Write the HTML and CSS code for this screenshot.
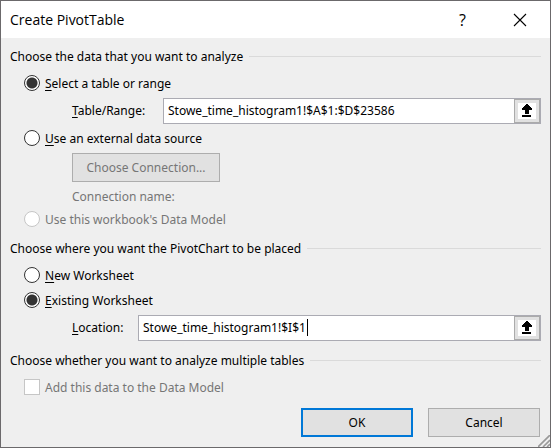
FILE: index.html
```html
<!DOCTYPE html>
<html lang="en">
<head>
<meta charset="utf-8">
<meta name="viewport" content="width=device-width, initial-scale=1">
<title>Create PivotTable</title>
<link rel="stylesheet" href="styles.css">
</head>
<body>
<form class="dialog" role="dialog" aria-labelledby="dialog-title">
  <header class="titlebar">
    <h1 id="dialog-title">Create PivotTable</h1>
    <button type="button" class="caption-button help" aria-label="Help">?</button>
    <button type="button" class="caption-button" aria-label="Close">
      <svg width="14" height="14" viewBox="0 0 14 14"><path d="M1 1 13 13M13 1 1 13" fill="none" stroke="#000" stroke-width="1.1"/></svg>
    </button>
  </header>
  <main class="content">
    <section class="group">
      <h2>Choose the data that you want to analyze</h2>
      <div class="options">
        <label class="choice"><input type="radio" name="source" checked><span><u>S</u>elect a table or range</span></label>
        <div class="field">
          <label class="range-label" for="range"><u>T</u>able/Range:</label>
          <div class="box">
            <input type="text" id="range" value="Stowe_time_histogram1!$A$1:$D$23586">
            <button type="button" class="picker" aria-label="Select range">
              <svg width="18" height="16" viewBox="0 0 18 16" shape-rendering="crispEdges"><path d="M0 0h18v16H0z" fill="#fff"/><path d="M8 1h2v1h1v1h1v1h1v1h1v2h-3v4H7V7H4V5h1V4h1V3h1V2h1zM4 12h9v2H4z"/></svg>
            </button>
          </div>
        </div>
        <label class="choice"><input type="radio" name="source"><span><u>U</u>se an external data source</span></label>
        <div class="connection">
          <button type="button" class="button wide" disabled>Choose Connection...</button>
          <p>Connection name:</p>
        </div>
        <label class="choice disabled"><input type="radio" name="source" disabled><span>Use this workbook's Data Model</span></label>
      </div>
    </section>
    <section class="group">
      <h2>Choose where you want the PivotChart to be placed</h2>
      <div class="options">
        <label class="choice"><input type="radio" name="place"><span><u>N</u>ew Worksheet</span></label>
        <label class="choice"><input type="radio" name="place" checked><span><u>E</u>xisting Worksheet</span></label>
        <div class="field">
          <label class="location-label" for="location"><u>L</u>ocation:</label>
          <div class="box">
            <input type="text" id="location" value="Stowe_time_histogram1!$I$1">
            <span class="caret"></span>
            <button type="button" class="picker" aria-label="Select location">
              <svg width="18" height="16" viewBox="0 0 18 16" shape-rendering="crispEdges"><path d="M0 0h18v16H0z" fill="#fff"/><path d="M8 1h2v1h1v1h1v1h1v1h1v2h-3v4H7V7H4V5h1V4h1V3h1V2h1zM4 12h9v2H4z"/></svg>
            </button>
          </div>
        </div>
      </div>
    </section>
    <section class="group">
      <h2>Choose whether you want to analyze multiple tables</h2>
      <div class="options">
        <label class="choice disabled"><input type="checkbox" disabled><span>Add this data to the Data Model</span></label>
      </div>
    </section>
  </main>
  <footer class="actions">
    <button type="submit" class="button primary">OK</button>
    <button type="button" class="button">Cancel</button>
  </footer>
  <svg class="grip" width="12" height="12" viewBox="0 0 12 12"><path d="M0 12 12 0M5 12 12 5M9 12 12 9" fill="none" stroke="#999" stroke-width="1.6"/></svg>
</form>
</body>
</html>
```
FILE: styles.css
```css
* { box-sizing: border-box; }

body {
  margin: 0;
  background: #efefef;
  color: #000;
  font: 12px/20px "Noto Sans", "Open Sans", sans-serif;
}

.dialog {
  position: relative;
  display: flex;
  flex-direction: column;
  min-height: 100vh;
  border: 1px solid #6b696b;
  background: #efefef;
}

button, input { font: inherit; color: inherit; }

h1, h2, p { margin: 0; font-weight: 400; }

.titlebar {
  display: flex;
  align-items: center;
  height: 37px;
  padding: 0 2px 0 9px;
  background: #fff;
}

h1 {
  flex: 1;
  font: 14px/20px "Open Sans", sans-serif;
}

.caption-button {
  display: grid;
  place-items: center;
  width: 57px;
  height: 36px;
  padding: 0;
  border: 0;
  background: none;
}

.help { font: 16px/20px "Open Sans", sans-serif; }

.content { padding: 9px 9px 0; }

h2 {
  display: flex;
  align-items: center;
  gap: 6px;
  margin-bottom: 6px;
  font-size: 12px;
}

h2::after {
  content: "";
  flex: 1;
  height: 1px;
  margin-bottom: 2px;
  background: #dadada;
}

.options {
  padding-left: 14px;
  margin-bottom: 10px;
}

.choice {
  display: flex;
  align-items: center;
  gap: 5px;
  height: 20px;
  margin-bottom: 5px;
}

.choice span { padding-top: 2px; }

.choice:last-child { margin-bottom: 0; }

u { text-underline-offset: 2px; }

.choice input {
  appearance: none;
  width: 16px;
  height: 16px;
  margin: 0;
  border: 1px solid #333;
  background: #fff;
}

.choice input[type="radio"] { border-radius: 50%; }

.choice input:checked {
  background: radial-gradient(circle, #333 5px, #fff 6px);
}

.choice input:disabled { border-color: #c6c6c6; }

.disabled, .connection { color: #767676; }

.field {
  display: flex;
  align-items: center;
  padding-left: 48px;
  margin-bottom: 4px;
}

.range-label { width: 91px; }
.location-label { width: 66px; }

.box {
  position: relative;
  display: flex;
  flex: 1;
  height: 26px;
  border: 1px solid #ababb3;
  background: #fff;
}

.box input {
  flex: 1;
  min-width: 0;
  padding: 0 4px;
  border: 0;
  background: none;
}

.picker {
  display: grid;
  place-items: center;
  width: 26px;
  padding: 0;
  border: 1px solid #ababab;
  background: #e1e1e1;
}

.picker svg { display: block; }

.caret {
  position: absolute;
  top: 3px;
  left: 168px;
  width: 1px;
  height: 17px;
  background: #000;
}

.connection {
  padding-left: 48px;
  margin-bottom: 2px;
}

.connection p { margin-top: 5px; }

.button {
  display: block;
  width: 112px;
  height: 29px;
  padding: 1px 0 0;
  border: 1px solid #adadad;
  background: #e1e1e1;
}

.wide { width: 148px; }

.button:disabled { color: #767676; }

.primary { border: 2px solid #0078d7; }

.actions {
  display: flex;
  justify-content: flex-end;
  gap: 15px;
  padding: 1px 10px 9px;
}

.grip {
  position: absolute;
  right: 0;
  bottom: 0;
}
```
